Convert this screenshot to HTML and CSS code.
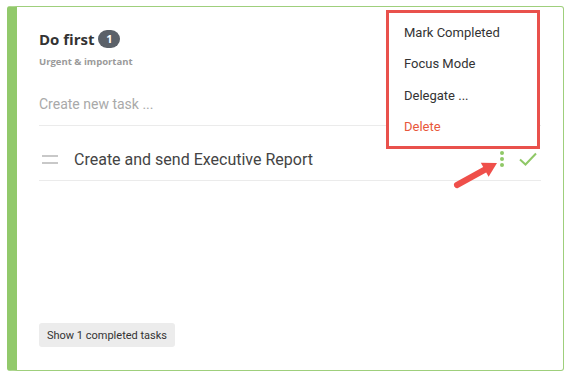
FILE: index.html
```html
<!DOCTYPE html>
<html lang="en">
<head>
    <meta charset="UTF-8">
    <meta name="viewport" content="width=device-width, initial-scale=1.0">
    <title>Do first</title>
    <link rel="stylesheet" href="styles.css">
</head>
<body>
    <div class="quadrant">
        <div class="quadrant-head">
            <h2>Do first <span class="badge">1</span></h2>
            <div class="subtitle">Urgent &amp; important</div>
        </div>

        <div class="new-task">Create new task ...</div>

        <div class="task">
            <span class="handle"></span>
            <span class="task-name">Create and send Executive Report</span>
            <span class="kebab"><i></i><i></i><i></i></span>
            <svg class="check" width="20" height="16" viewBox="0 0 20 16">
                <path d="M2 8.5 L7.5 13.5 L18 2.5" fill="none" stroke="#8fc867" stroke-width="2"/>
            </svg>
        </div>

        <div class="spacer"></div>
        <button class="show-done">Show 1 completed tasks</button>

        <!-- dropdown + annotation arrow -->
        <ul class="menu">
            <li>Mark Completed</li>
            <li>Focus Mode</li>
            <li>Delegate ...</li>
            <li class="danger">Delete</li>
        </ul>
        <svg class="arrow" width="50" height="40" viewBox="0 0 50 40">
            <line x1="6" y1="34" x2="35" y2="18" stroke="#ef4f4a" stroke-width="6" stroke-linecap="round"/>
            <polygon points="46,12 29.8,11.7 37.6,25.7" fill="#ef4f4a"/>
        </svg>
    </div>
</body>
</html>
```

FILE: styles.css
```css
body { margin: 0; background: #fff; font-family: Roboto, "Liberation Sans", sans-serif; }
.quadrant { position: relative; box-sizing: border-box; margin: 6px 0 0 7px; width: 557px; height: 365px; background: #fff; border: 1px solid #9fcf7c; border-left: 10px solid #92c96b; border-radius: 3px; padding: 21px 22px 23px 22px; display: flex; flex-direction: column; }
.quadrant-head h2 { margin: 0; font-family: "Open Sans", sans-serif; font-size: 15px; font-weight: 700; color: #333; line-height: 22px; display: flex; align-items: center; }
.badge { display: inline-flex; align-items: center; justify-content: center; margin-left: 4px; width: 22px; height: 18px; border-radius: 9px; background: #5b6169; color: #fff; font-size: 11px; font-weight: 700; }
.subtitle { margin-top: 5px; font-family: "Open Sans", sans-serif; font-size: 9.5px; font-weight: 700; color: #9a9a9a; }
.new-task { margin-top: 28px; padding-bottom: 13px; font-size: 14px; color: #a9a9a9; border-bottom: 1px solid #ebebeb; }
.task { display: flex; align-items: center; height: 42px; padding-top: 12px; border-bottom: 1px solid #ebebeb; }
.handle { width: 16px; height: 5px; margin: 0 16px 0 3px; border-top: 2px solid #c8c8c8; border-bottom: 2px solid #c8c8c8; }
.task-name { flex: 1; font-size: 16px; color: #444; }
.kebab { display: flex; flex-direction: column; gap: 2px; margin-right: 14px; }
.kebab i { width: 4px; height: 4px; border-radius: 50%; background: #8fc867; }
.check { margin-right: 3px; }
.spacer { flex: 1; }
.show-done { align-self: flex-start; border: 0; border-radius: 3px; background: #ececec; color: #333; font-family: Roboto, sans-serif; font-size: 11px; padding: 5px 8px; height: 24px; }
.menu { position: absolute; left: 369px; top: 3px; box-sizing: border-box; width: 154px; height: 139px; margin: 0; padding: 4px 0 0 0; list-style: none; background: #fff; border: 3px solid #e9514c; font-size: 13px; color: #333; }
.menu li { padding: 5px 15px; height: 21.3px; line-height: 21px; }
.menu .danger { color: #e8573b; }
.arrow { position: absolute; left: 434px; top: 144px; }
```
